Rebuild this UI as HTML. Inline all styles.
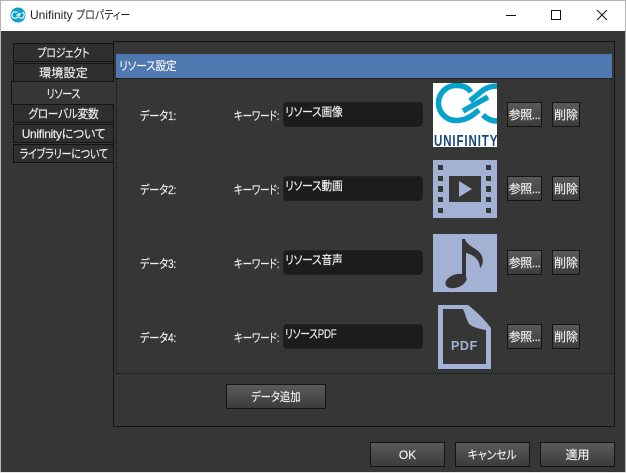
<!DOCTYPE html>
<html lang="ja"><head><meta charset="utf-8"><title>Unifinity プロパティー</title>
<style>
html,body{margin:0;padding:0;width:626px;height:473px;overflow:hidden;background:#e6e6e6}
body{position:relative;font-family:"Liberation Sans","Noto Sans CJK JP",sans-serif;font-size:12px;color:#eee;font-feature-settings:"palt"}
div{position:absolute;box-sizing:border-box}
span{display:inline-block;transform-origin:left center}
.c span{transform-origin:center}
.c{display:flex;align-items:center;justify-content:center;white-space:nowrap}
.tab{left:13px;width:100px;background:#2f2f2f;border:1px solid #141414;border-right:0;font-size:12px;letter-spacing:-.3px;color:#f0f0f0;-webkit-text-stroke:.15px #f0f0f0}
.btn{background:linear-gradient(#5a5a5a,#3c3c3c);border:1px solid #141414;color:#f0f0f0;font-size:12px;-webkit-text-stroke:.15px #f0f0f0}
.inp{left:283px;width:140px;height:25px;background:#1c1c1c;border-radius:4px;border:1px solid #222;padding:1px 0 0 1px;font-size:12px;color:#f4f4f4;line-height:16px;white-space:nowrap;letter-spacing:-.2px;-webkit-text-stroke:.15px #f4f4f4}
.lb{white-space:nowrap;font-size:12px;color:#f0f0f0;line-height:14px;letter-spacing:-.2px;-webkit-text-stroke:.15px #f0f0f0}
.s{font-size:12px;letter-spacing:-.5px}
svg{position:absolute;display:block}
</style></head><body>
<div style="left:0;top:0;width:626px;height:472px;border:1px solid #b4b4b4;border-bottom:0;background:#363636"></div>
<div style="left:1px;top:1px;width:624px;height:30px;background:#fff"></div>
<svg style="left:10px;top:7px" width="16" height="16" viewBox="0 0 16 16"><circle cx="8" cy="8" r="7.500" fill="#0a9fcf"/><path d="M7.500 5.500C6.500 4.800 5.800 4.800 5 4.800A3.200 3.200 0 0 0 5 11.200C6 11.200 7 10.800 8 9.800L11 6.200M6.500 8.600 9.600 6.200M9 10.300C9.800 11 10.500 11.200 11.200 11.200A3.200 3.200 0 0 0 12.500 5.200" fill="none" stroke="#fff" stroke-width="1.200"/></svg>
<div style="left:30px;top:7px;color:#222;font-size:12px;line-height:16px;white-space:nowrap">Unifinity <span style="transform:scaleX(.83)">プロパティー</span></div>
<svg style="left:500px;top:5px" width="120" height="20" viewBox="0 0 120 20"><path d="M6 10.500H16" stroke="#111" fill="none"/><rect x="51.500" y="5.500" width="9" height="9" fill="none" stroke="#111"/><path d="M97 5 107 15M107 5 97 15" stroke="#111" fill="none"/></svg>

<div style="left:113px;top:41px;width:502px;height:386px;border:1px solid #141414;background:#363636"></div>
<div class="tab c" style="top:43px;height:19px"><span style="transform:scaleX(.83)">プロジェクト</span></div>
<div class="tab c" style="top:63px;height:19px;letter-spacing:.2px">環境設定</div>
<div class="tab c" style="top:104px;height:19px"><span style="transform:scaleX(.89)">グローバル変数</span></div>
<div class="tab c" style="top:124px;height:19px">Unifinityについて</div>
<div class="tab c" style="top:144px;height:19px"><span style="transform:scaleX(.84)">ライブラリーについて</span></div>
<div class="tab c" style="left:11px;width:103px;top:81px;height:24px;background:#363636"><span style="transform:scaleX(.83)">リソース</span></div>
<div style="left:116px;top:54px;width:496px;height:24px;background:#4f78b0;padding:4px 0 0 3px;line-height:16px;color:#f6f6f6;letter-spacing:-.2px;-webkit-text-stroke:.15px #f6f6f6"><span style="transform:scaleX(.89)">リソース設定</span></div>
<div style="left:116px;top:78px;width:496px;height:296px;border:1px dotted #111"></div>

<div class="lb" style="left:140px;top:109px"><span style="transform:scaleX(.85)">データ1:</span></div><div class="lb" style="left:234px;top:109px"><span style="transform:scaleX(.79)">キーワード:</span></div>
<div class="inp" style="top:102px"><span style="transform:scaleX(.89)">リソース画像</span></div>
<div class="lb" style="left:140px;top:183px"><span style="transform:scaleX(.85)">データ2:</span></div><div class="lb" style="left:234px;top:183px"><span style="transform:scaleX(.79)">キーワード:</span></div>
<div class="inp" style="top:176px"><span style="transform:scaleX(.89)">リソース動画</span></div>
<div class="lb" style="left:140px;top:257px"><span style="transform:scaleX(.85)">データ3:</span></div><div class="lb" style="left:234px;top:257px"><span style="transform:scaleX(.79)">キーワード:</span></div>
<div class="inp" style="top:250px"><span style="transform:scaleX(.89)">リソース音声</span></div>
<div class="lb" style="left:140px;top:331px"><span style="transform:scaleX(.85)">データ4:</span></div><div class="lb" style="left:234px;top:331px"><span style="transform:scaleX(.79)">キーワード:</span></div>
<div class="inp" style="top:324px"><span style="transform:scaleX(.8)">リソースPDF</span></div>

<div class="btn c s" style="left:507px;top:102px;width:35px;height:25px">参照...</div><div class="btn c" style="left:552px;top:102px;width:28px;height:25px">削除</div>
<div class="btn c s" style="left:507px;top:176px;width:35px;height:25px">参照...</div><div class="btn c" style="left:552px;top:176px;width:28px;height:25px">削除</div>
<div class="btn c s" style="left:507px;top:250px;width:35px;height:25px">参照...</div><div class="btn c" style="left:552px;top:250px;width:28px;height:25px">削除</div>
<div class="btn c s" style="left:507px;top:324px;width:35px;height:25px">参照...</div><div class="btn c" style="left:552px;top:324px;width:28px;height:25px">削除</div>

<svg style="left:433px;top:83px" width="64" height="64" viewBox="0 0 64 64"><rect width="64" height="64" fill="#fff"/>
<path d="M38 9C35 5 31 2.500 25 2.500H23A17.500 17.500 0 0 0 23 37.500C30 37.500 36 35 41 31L46 27" fill="none" stroke="#06a2cc" stroke-width="5.500"/>
<path d="M30 28 55 14" fill="none" stroke="#06a2cc" stroke-width="5.500"/>
<path d="M37 18 49 8C53 5 58 3 64 3" fill="none" stroke="#06a2cc" stroke-width="5.500"/>
<path d="M50 32C54 36 59 38 64 38" fill="none" stroke="#06a2cc" stroke-width="5.500"/>
<text transform="scale(.72 1)" x="1.400 14.200 26.900 32.600 43.600 49.300 62.100 67.800 78.800" y="63" font-family="Liberation Sans" font-weight="bold" font-size="16" fill="#16477f">UNIFINITY</text></svg>

<svg style="left:433px;top:160px" width="64" height="58" viewBox="0 0 64 58"><rect width="64" height="58" fill="#a3b1d4"/>
<g fill="#363636"><rect x="5" y="5" width="5" height="5"/><rect x="5" y="16" width="5" height="5"/><rect x="5" y="26" width="5" height="6"/><rect x="5" y="37" width="5" height="5"/><rect x="5" y="48" width="5" height="5"/><rect x="53" y="5" width="5" height="5"/><rect x="53" y="16" width="5" height="5"/><rect x="53" y="26" width="5" height="6"/><rect x="53" y="37" width="5" height="5"/><rect x="53" y="48" width="5" height="5"/><rect x="16" y="16" width="32" height="26"/></g>
<path d="M26 21 39 29 26 37Z" fill="#a3b1d4"/></svg>

<svg style="left:433px;top:234px" width="64" height="58" viewBox="0 0 64 58"><rect width="64" height="58" fill="#a3b1d4"/>
<g fill="#363636"><path d="M29 5 32 5C33 10 40 13 45 17 51 22 51 30 47 34 47 27 42 21 33 19L33 46 29 46Z"/><ellipse cx="23" cy="47" rx="11" ry="6.500" transform="rotate(-20 23 47)"/></g></svg>

<svg style="left:438px;top:305px" width="53" height="64" viewBox="0 0 53 64"><path d="M0 0H30C38 6 46 14 53 23V64H0Z" fill="#a3b1d4"/>
<path d="M5 4H25C27 8 28 13 30 17 32 22 42 24 48 25V59H5Z" fill="#363636"/>
<text x="13" y="45" font-family="Liberation Sans" font-weight="bold" font-size="12.500" letter-spacing=".6" fill="#a3b1d4">PDF</text></svg>

<div class="btn c" style="left:226px;top:384px;width:100px;height:25px"><span style="transform:scaleX(.86)">データ追加</span></div>
<div class="btn c" style="left:370px;top:442px;width:75px;height:25px">OK</div>
<div class="btn c" style="left:455px;top:442px;width:75px;height:25px"><span style="transform:scaleX(.9)">キャンセル</span></div>
<div class="btn c" style="left:540px;top:442px;width:75px;height:25px">適用</div>
</body></html>
